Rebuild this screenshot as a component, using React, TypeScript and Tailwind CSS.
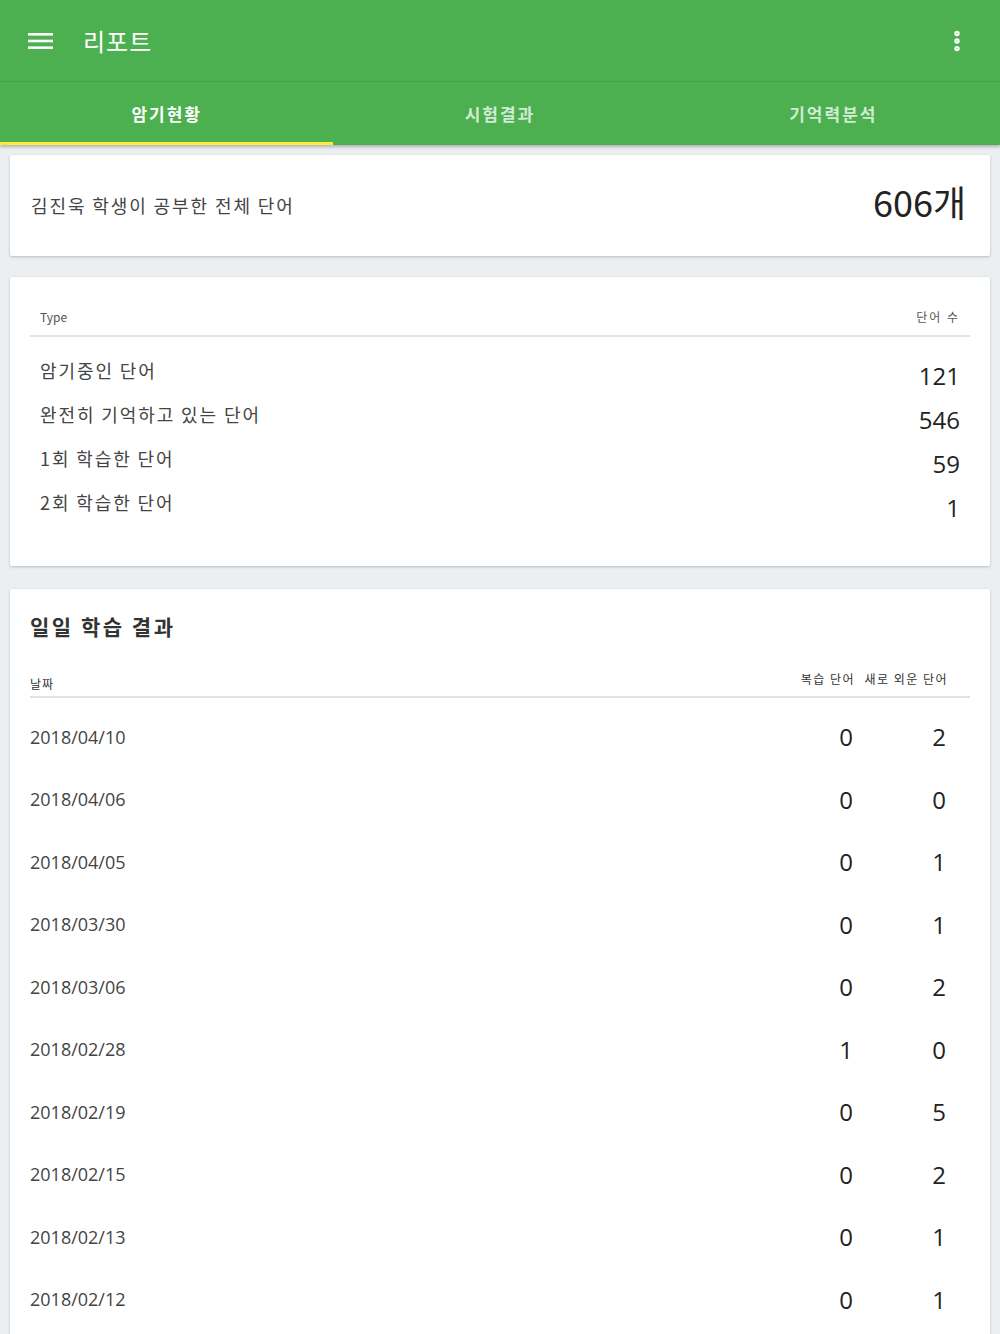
import { MoreVertical } from "lucide-react";

const typeRows = [
  { label: "암기중인 단어", count: 121 },
  { label: "완전히 기억하고 있는 단어", count: 546 },
  { label: "1회 학습한 단어", count: 59 },
  { label: "2회 학습한 단어", count: 1 },
];

const daily = [
  { date: "2018/04/10", review: 0, fresh: 2 },
  { date: "2018/04/06", review: 0, fresh: 0 },
  { date: "2018/04/05", review: 0, fresh: 1 },
  { date: "2018/03/30", review: 0, fresh: 1 },
  { date: "2018/03/06", review: 0, fresh: 2 },
  { date: "2018/02/28", review: 1, fresh: 0 },
  { date: "2018/02/19", review: 0, fresh: 5 },
  { date: "2018/02/15", review: 0, fresh: 2 },
  { date: "2018/02/13", review: 0, fresh: 1 },
  { date: "2018/02/12", review: 0, fresh: 1 },
];

const tabs = ["암기현황", "시험결과", "기억력분석"];

export default function App() {
  return (
    <div className="h-[1334px] bg-[#eceff1] font-['Noto_Sans_CJK_KR','Noto_Sans',sans-serif] overflow-hidden">
      {/* Toolbar */}
      <header className="bg-[#4caf50] text-white shadow-[0_2px_3px_rgba(0,0,0,0.25)] relative z-10">
        <div className="h-[82px] flex items-center pl-[28px] pr-[30px] border-b border-[#43a047]">
          <svg width="25" height="16" viewBox="0 0 25 16" className="shrink-0">
            <rect x="0" y="0" width="25" height="2.6" fill="white" />
            <rect x="0" y="6.7" width="25" height="2.6" fill="white" />
            <rect x="0" y="13.4" width="25" height="2.6" fill="white" />
          </svg>
          <h1 className="ml-[30px] text-[24px] leading-none tracking-[1px]">리포트</h1>
          <MoreVertical className="ml-auto" size={26} strokeWidth={3} />
        </div>
        <nav className="flex h-[63px]">
          {tabs.map((t, i) => (
            <div
              key={t}
              className={
                i === 0
                  ? "flex-1 flex items-center justify-center text-[17px] font-bold tracking-[2px] text-white border-b-[3px] border-[#ffeb3b] pt-[3px]"
                  : "flex-1 flex items-center justify-center text-[17px] font-bold tracking-[2px] text-white/75 border-b-[3px] border-transparent pt-[3px]"
              }
            >
              {t}
            </div>
          ))}
        </nav>
      </header>

      <main className="px-[10px] pt-[10px] flex flex-col">
        {/* Total */}
        <section className="bg-white rounded-[2px] shadow-[0_1px_3px_rgba(0,0,0,0.22)] h-[101px] flex items-center pl-[21px] pr-[24px]">
          <p className="text-[18px] text-[#444] tracking-[1.9px]">김진욱 학생이 공부한 전체 단어</p>
          <p className="ml-auto text-[36px] text-[#222] leading-none -mt-[9px]">606개</p>
        </section>

        {/* Type table */}
        <section className="mt-[21px] bg-white rounded-[2px] shadow-[0_1px_3px_rgba(0,0,0,0.22)] pt-[25px] pb-[37px] px-[20px]">
          <div className="h-[35px] flex items-end justify-between pb-[9px] pl-[10px] pr-[10px] border-b-2 border-[#e3e3e3] text-[12px] text-[#555]">
            <span>Type</span>
            <span className="tracking-[2px]">단어 수</span>
          </div>
          <div className="pt-[16px] px-[10px]">
            {typeRows.map((r) => (
              <div key={r.label} className="h-[44px] flex justify-between items-center">
                <span className="text-[18px] text-[#444] tracking-[1.9px] -mt-[9px]">{r.label}</span>
                <span className="text-[24px] text-[#222] font-['Open_Sans',sans-serif] mt-[2px]">{r.count}</span>
              </div>
            ))}
          </div>
        </section>

        {/* Daily */}
        <section className="mt-[23px] bg-white rounded-[2px] shadow-[0_1px_3px_rgba(0,0,0,0.22)] pt-[22px] pb-[40px] px-[20px]">
          <h2 className="text-[21px] font-bold text-[#333] leading-[30px] tracking-[2.5px]">일일 학습 결과</h2>
          <div className="mt-[31px] h-[26px] flex items-end pb-[3px] border-b-2 border-[#e3e3e3] text-[12px] text-[#333]">
            <span className="flex-1 tracking-[1px]">날짜</span>
            <div className="flex pr-[22px] -translate-y-[5px] tracking-[1.5px]">
              <span className="w-[64px] text-right">복습 단어</span>
              <span className="w-[93px] text-right">새로 외운 단어</span>
            </div>
          </div>
          <div className="pt-[8px]">
            {daily.map((d) => (
              <div key={d.date} className="h-[62.5px] flex items-center">
                <span className="flex-1 text-[18px] text-[#444] font-['Open_Sans',sans-serif]">{d.date}</span>
                <div className="flex pr-[24px] text-[24px] text-[#222] font-['Open_Sans',sans-serif]">
                  <span className="w-[64px] text-right">{d.review}</span>
                  <span className="w-[93px] text-right">{d.fresh}</span>
                </div>
              </div>
            ))}
          </div>
        </section>
      </main>
    </div>
  );
}
